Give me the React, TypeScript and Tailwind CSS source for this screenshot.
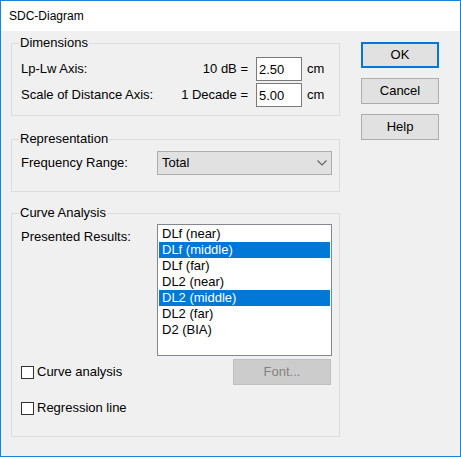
import React, { useState } from 'react'

type GroupProps = { title: string; className?: string; children: React.ReactNode }

// Classic group box: border line runs through the middle of the caption
function GroupBox({ title, className = '', children }: GroupProps) {
  return (
    <fieldset className={`border border-[#dcdcdc] ${className}`}>
      <legend className="ml-[7px] px-[1px] leading-4">{title}</legend>
      {children}
    </fieldset>
  )
}

function Button({ label, primary = false, disabled = false, className = '' }: { label: string; primary?: boolean; disabled?: boolean; className?: string }) {
  let look = 'border border-[#adadad] bg-[#e1e1e1] text-black'
  if (primary) look = 'border-2 border-[#0078d7] bg-[#e1e1e1] text-black'
  if (disabled) look = 'border border-[#bfbfbf] bg-[#cccccc] text-[#838383]'
  return (
    <button type="button" className={`h-[26px] flex items-center justify-center leading-4 ${look} ${className}`}>
      {label}
    </button>
  )
}

function CheckBox({ label, checked }: { label: string; checked: boolean }) {
  return (
    <label className="flex items-center gap-[3px] h-[26px]">
      <span className="w-[13px] h-[13px] border border-[#333333] bg-white flex items-center justify-center">
        {checked && (
          <svg width="9" height="9" viewBox="0 0 9 9">
            <path d="M1 4.5 L3.5 7 L8 1.5" fill="none" stroke="#333" strokeWidth="1.4" />
          </svg>
        )}
      </span>
      <span>{label}</span>
    </label>
  )
}

const results = ['DLf (near)', 'DLf (middle)', 'DLf (far)', 'DL2 (near)', 'DL2 (middle)', 'DL2 (far)', 'D2 (BIA)']

export default function App() {
  const [selected] = useState<number[]>([1, 4])
  const [lpAxis, setLpAxis] = useState('2.50')
  const [distAxis, setDistAxis] = useState('5.00')

  return (
    <div className="w-[461px] h-[457px] border border-[#1883d7] bg-[#f0f0f0] flex flex-col text-[13px] leading-4 text-black font-['Liberation_Sans',Arial,sans-serif]">
      <div className="h-[30px] shrink-0 bg-white flex items-center pl-[8px] text-[12px]">SDC-Diagram</div>

      <div className="flex pl-[10px]">
        <div className="w-[329px] flex flex-col pt-[4px]">
          <GroupBox title="Dimensions">
            <div className="flex flex-col gap-[2px] pt-[6px] pb-[8px] pl-[9px] pr-[4px]">
              <div className="flex items-center h-[24px]">
                <span className="flex-1">Lp-Lw Axis:</span>
                <span>10 dB =</span>
                <input
                  value={lpAxis}
                  onChange={e => setLpAxis(e.target.value)}
                  className="ml-[8px] w-[46px] h-[24px] border border-[#7a7a7a] bg-white pl-[2px] outline-none"
                />
                <span className="ml-[5px] w-[28px]">cm</span>
              </div>
              <div className="flex items-center h-[24px]">
                <span className="flex-1">Scale of Distance Axis:</span>
                <span>1 Decade =</span>
                <input
                  value={distAxis}
                  onChange={e => setDistAxis(e.target.value)}
                  className="ml-[8px] w-[46px] h-[24px] border border-[#7a7a7a] bg-white pl-[2px] outline-none"
                />
                <span className="ml-[5px] w-[28px]">cm</span>
              </div>
            </div>
          </GroupBox>

          <GroupBox title="Representation" className="mt-[15px]">
            <div className="grid grid-cols-[136px_175px] items-center pt-[4px] pb-[16px] pl-[9px]">
              <span>Frequency Range:</span>
              <div className="h-[24px] border border-[#adadad] bg-[#e1e1e1] flex items-center justify-between pl-[4px] pr-[4px]">
                <span>Total</span>
                <svg width="10" height="6" viewBox="0 0 10 6">
                  <path d="M0.5 0.5 L5 5 L9.5 0.5" fill="none" stroke="#5f5f5f" strokeWidth="1.1" />
                </svg>
              </div>
            </div>
          </GroupBox>

          <GroupBox title="Curve Analysis" className="mt-[13px]">
            <div className="grid grid-cols-[136px_175px] pt-[3px] pb-[15px] pl-[9px]">
              <span className="mt-[5px] self-start">Presented Results:</span>
              <div className="h-[132px] border border-[#828790] bg-white p-[1px] flex flex-col">
                {results.map((r, i) => (
                  <div
                    key={r}
                    className={`h-4 pl-[3px] whitespace-nowrap ${selected.includes(i) ? 'bg-[#0078d7] text-white' : ''}`}
                  >
                    {r}
                  </div>
                ))}
              </div>

              <div className="mt-[3px]">
                <CheckBox label="Curve analysis" checked={false} />
              </div>
              <div className="mt-[3px] flex justify-end pr-[1px]">
                <Button label="Font..." disabled className="w-[98px]" />
              </div>

              <div className="mt-[10px] col-span-2">
                <CheckBox label="Regression line" checked={false} />
              </div>
            </div>
          </GroupBox>
        </div>

        <div className="ml-[21px] pt-[11px] flex flex-col gap-[10px]">
          <Button label="OK" primary className="w-[78px]" />
          <Button label="Cancel" className="w-[78px]" />
          <Button label="Help" className="w-[78px]" />
        </div>
      </div>
    </div>
  )
}
